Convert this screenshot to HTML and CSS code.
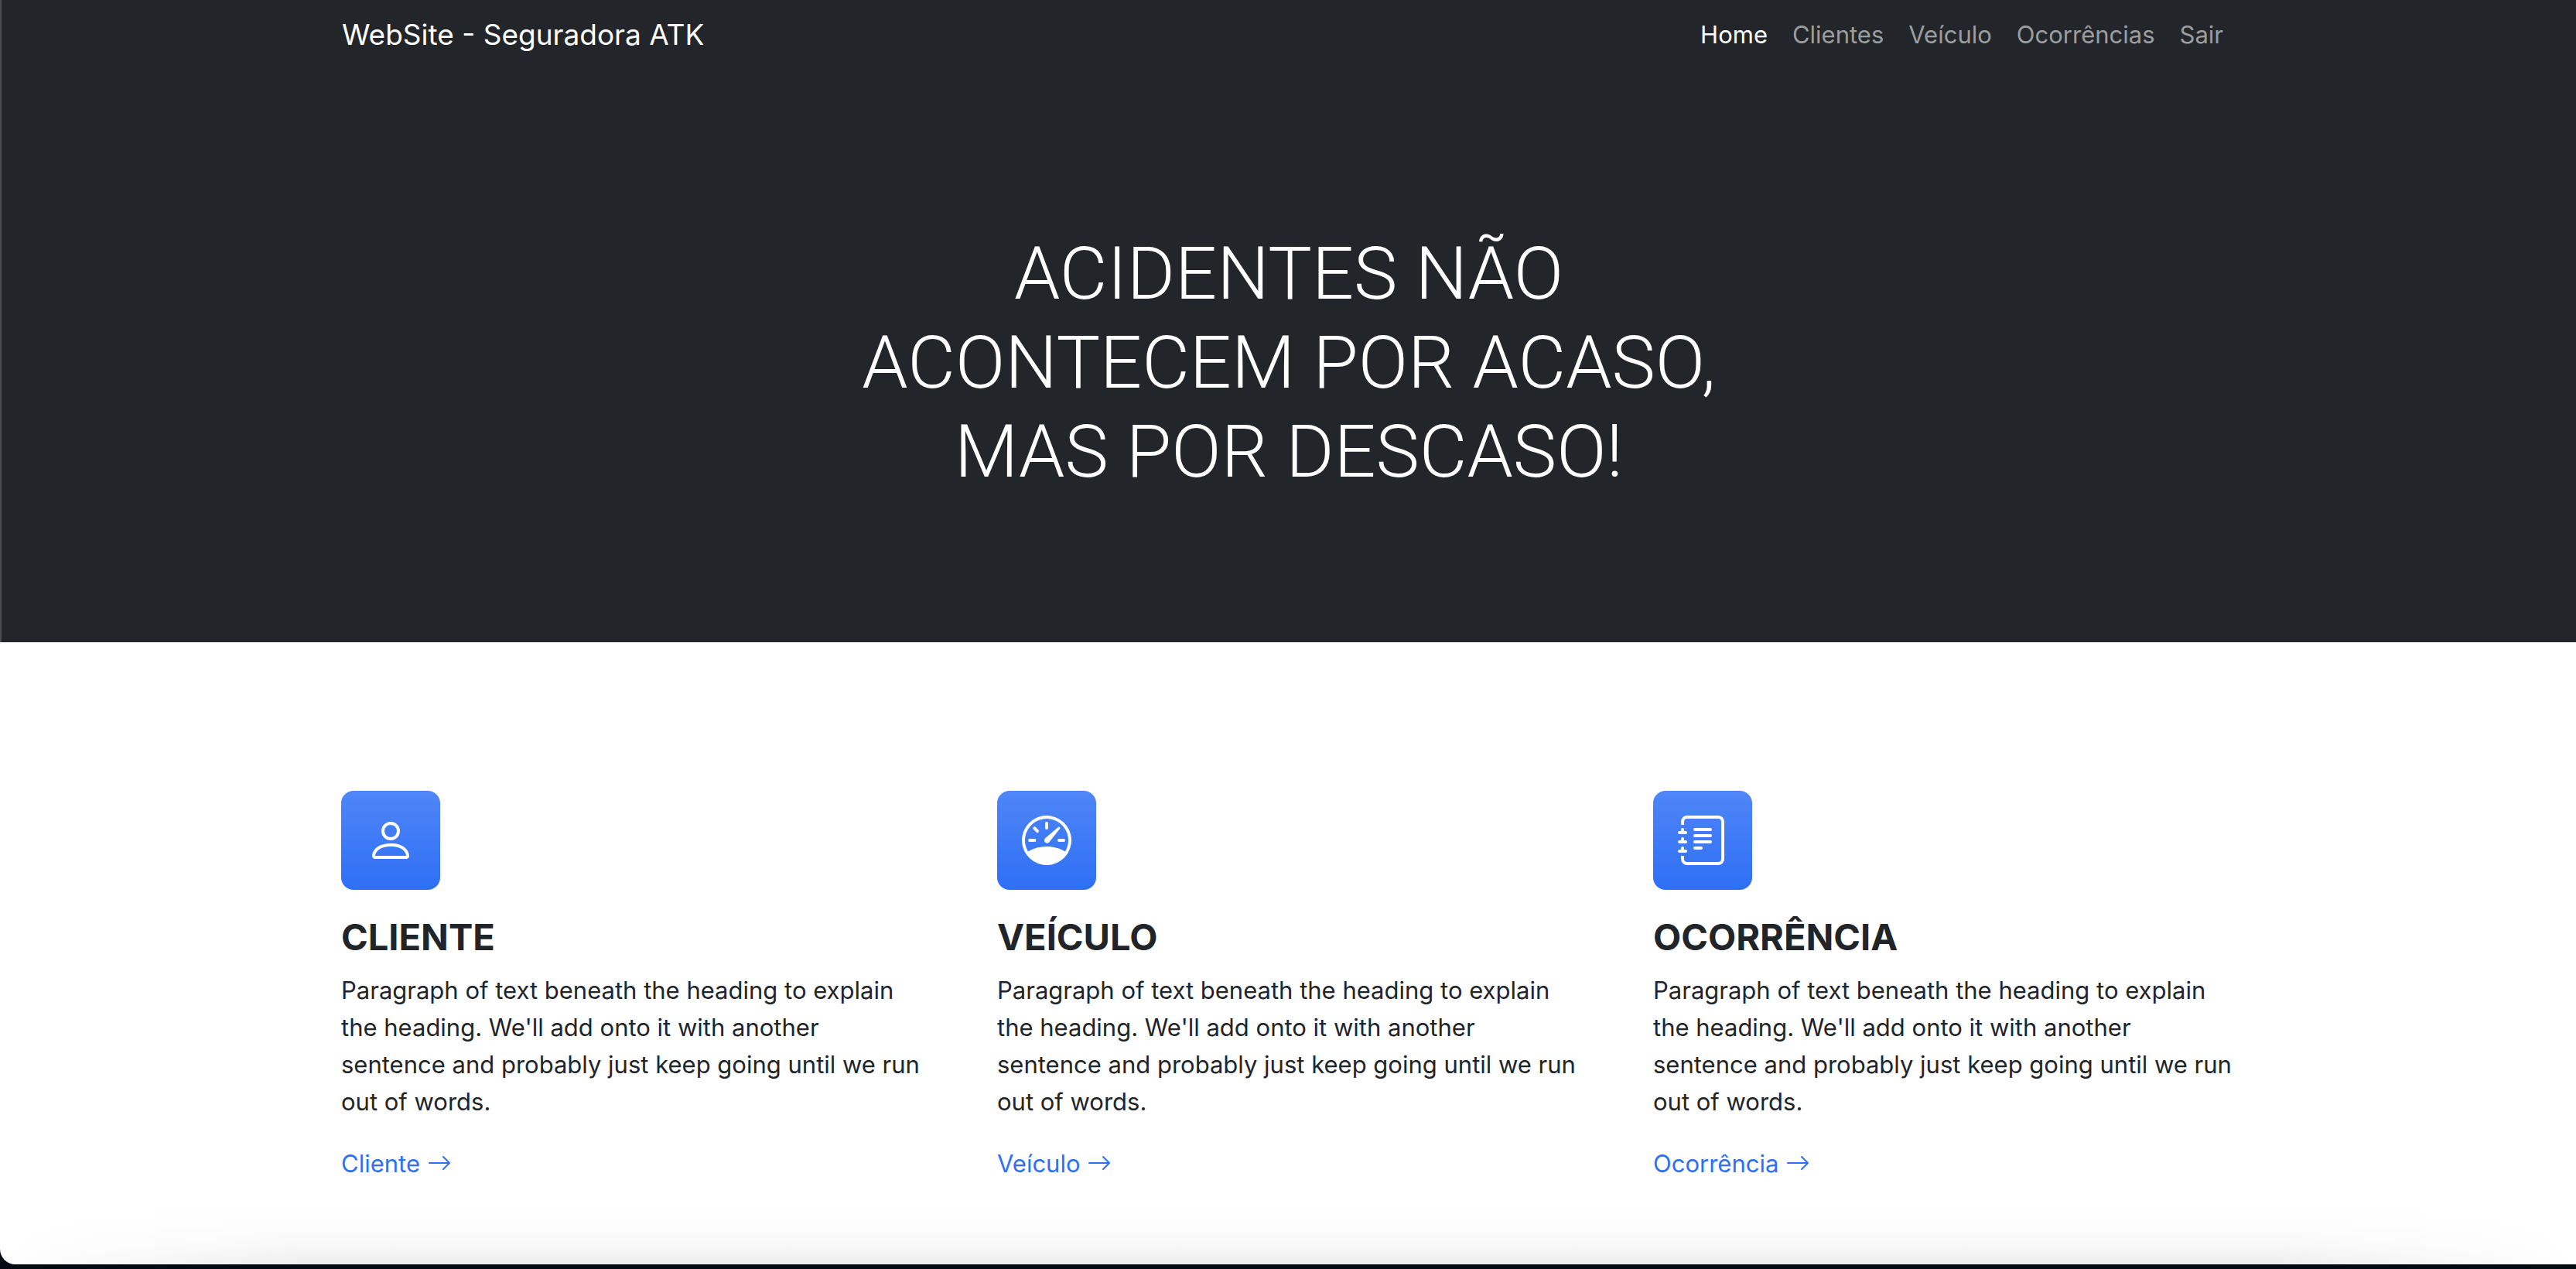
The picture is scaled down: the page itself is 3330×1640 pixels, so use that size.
FILE: index.html
```html
<!DOCTYPE html>
<html lang="pt-BR">
<head>
<meta charset="utf-8">
<meta name="viewport" content="width=device-width, initial-scale=1">
<title>WebSite - Seguradora ATK</title>
<link rel="stylesheet" href="styles.css">
</head>
<body>
<div class="window">
  <header class="top">
    <nav class="navbar container">
      <a class="brand" href="#">WebSite - Seguradora ATK</a>
      <ul class="nav-list">
        <li><a class="nav-link active" href="#">Home</a></li>
        <li><a class="nav-link" href="#">Clientes</a></li>
        <li><a class="nav-link" href="#">Veículo</a></li>
        <li><a class="nav-link" href="#">Ocorrências</a></li>
        <li><a class="nav-link" href="#">Sair</a></li>
      </ul>
    </nav>
    <div class="hero">
      <h1 class="hero-title">ACIDENTES NÃO ACONTECEM POR ACASO, MAS POR DESCASO!</h1>
    </div>
  </header>
  <main class="features container">
    <section class="feature">
      <div class="feature-icon">
        <svg viewBox="0 0 16 16" aria-hidden="true"><path d="M8 8a3 3 0 1 0 0-6 3 3 0 0 0 0 6Zm2-3a2 2 0 1 1-4 0 2 2 0 0 1 4 0Zm4 8c0 1-1 1-1 1H3s-1 0-1-1 1-4 6-4 6 3 6 4Zm-1-.004c-.001-.246-.154-.986-.832-1.664C11.516 10.68 10.289 10 8 10c-2.29 0-3.516.68-4.168 1.332-.678.678-.83 1.418-.832 1.664h10Z"/></svg>
      </div>
      <h2 class="feature-title">CLIENTE</h2>
      <p class="feature-text">Paragraph of text beneath the heading to explain the heading. We'll add onto it with another sentence and probably just keep going until we run out of words.</p>
      <a class="feature-link" href="#">Cliente <svg class="arrow" viewBox="0 0 16 16" aria-hidden="true"><path d="M1 8a.5.5 0 0 1 .5-.5h11.793l-3.147-3.146a.5.5 0 0 1 .708-.708l4 4a.5.5 0 0 1 0 .708l-4 4a.5.5 0 0 1-.708-.708L13.293 8.500H1.500A.5.5 0 0 1 1 8z"/></svg></a>
    </section>
    <section class="feature">
      <div class="feature-icon">
        <svg viewBox="0 0 16 16" aria-hidden="true"><path d="M8 2a.5.5 0 0 1 .5.5V4a.5.5 0 0 1-1 0V2.500A.5.5 0 0 1 8 2zM3.732 3.732a.5.5 0 0 1 .707 0l.915.914a.5.5 0 1 1-.708.708l-.914-.915a.5.5 0 0 1 0-.707zM2 8a.5.5 0 0 1 .5-.5h1.586a.5.5 0 0 1 0 1H2.500A.5.5 0 0 1 2 8zm9.500 0a.5.5 0 0 1 .5-.5h1.500a.5.5 0 0 1 0 1H12a.5.5 0 0 1-.5-.5zm.754-4.246a.389.389 0 0 0-.527-.020L7.547 7.310A.91.91 0 1 0 8.850 8.569l3.434-4.297a.389.389 0 0 0-.029-.518z"/><path fill-rule="evenodd" d="M6.664 15.889A8 8 0 1 1 9.336.110a8 8 0 0 1-2.672 15.780zm-4.665-4.283A11.945 11.945 0 0 1 8 10c2.186 0 4.236.585 6.001 1.606a7 7 0 1 0-12.002 0z"/></svg>
      </div>
      <h2 class="feature-title">VEÍCULO</h2>
      <p class="feature-text">Paragraph of text beneath the heading to explain the heading. We'll add onto it with another sentence and probably just keep going until we run out of words.</p>
      <a class="feature-link" href="#">Veículo <svg class="arrow" viewBox="0 0 16 16" aria-hidden="true"><path d="M1 8a.5.5 0 0 1 .5-.5h11.793l-3.147-3.146a.5.5 0 0 1 .708-.708l4 4a.5.5 0 0 1 0 .708l-4 4a.5.5 0 0 1-.708-.708L13.293 8.500H1.500A.5.5 0 0 1 1 8z"/></svg></a>
    </section>
    <section class="feature">
      <div class="feature-icon">
        <svg viewBox="0 0 16 16" aria-hidden="true"><path d="M5 10.500a.5.5 0 0 1 .5-.5h2a.5.5 0 0 1 0 1h-2a.5.5 0 0 1-.5-.5zm0-2a.5.5 0 0 1 .5-.5h5a.5.5 0 0 1 0 1h-5a.5.5 0 0 1-.5-.5zm0-2a.5.5 0 0 1 .5-.5h5a.5.5 0 0 1 0 1h-5a.5.5 0 0 1-.5-.5zm0-2a.5.5 0 0 1 .5-.5h5a.5.5 0 0 1 0 1h-5a.5.5 0 0 1-.5-.5z"/><path d="M3 0h10a2 2 0 0 1 2 2v12a2 2 0 0 1-2 2H3a2 2 0 0 1-2-2v-1h1v1a1 1 0 0 0 1 1h10a1 1 0 0 0 1-1V2a1 1 0 0 0-1-1H3a1 1 0 0 0-1 1v1H1V2a2 2 0 0 1 2-2z"/><path d="M1 5v-.5a.5.5 0 0 1 1 0V5h.5a.5.5 0 0 1 0 1h-2a.5.5 0 0 1 0-1H1zm0 3v-.5a.5.5 0 0 1 1 0V8h.5a.5.5 0 0 1 0 1h-2a.5.5 0 0 1 0-1H1zm0 3v-.5a.5.5 0 0 1 1 0v.5h.5a.5.5 0 0 1 0 1h-2a.5.5 0 0 1 0-1H1z"/></svg>
      </div>
      <h2 class="feature-title">OCORRÊNCIA</h2>
      <p class="feature-text">Paragraph of text beneath the heading to explain the heading. We'll add onto it with another sentence and probably just keep going until we run out of words.</p>
      <a class="feature-link" href="#">Ocorrência <svg class="arrow" viewBox="0 0 16 16" aria-hidden="true"><path d="M1 8a.5.5 0 0 1 .5-.5h11.793l-3.147-3.146a.5.5 0 0 1 .708-.708l4 4a.5.5 0 0 1 0 .708l-4 4a.5.5 0 0 1-.708-.708L13.293 8.500H1.500A.5.5 0 0 1 1 8z"/></svg></a>
    </section>
  </main>
</div>
</body>
</html>
```

FILE: styles.css
```css
* {
  box-sizing: border-box;
}

body {
  margin: 0;
  min-height: 100vh;
  display: flex;
  flex-direction: column;
  padding-bottom: 6px;
  background: #030a14;
  color: #212529;
  font-family: Inter, "Liberation Sans", sans-serif;
  font-size: 31px;
  line-height: 48px;
}

a {
  text-decoration: none;
}

.window {
  flex: 1;
  background:
    linear-gradient(90deg, #fff, #fff0 12%, #fff0 88%, #fff),
    linear-gradient(0deg, #ededed, #f8f8f8 24px, #fdfdfd 50px, #fff 80px);
  border-bottom-left-radius: 20px;
  overflow: hidden;
}

.container {
  width: 100%;
  max-width: 2640px;
  margin: 0 auto;
  padding-left: 96px;
  padding-right: 96px;
}

.top {
  background: #22262a;
  border-left: 2px solid #484b4f;
}

.navbar {
  display: flex;
  align-items: center;
  justify-content: space-between;
  height: 90px;
}

.brand {
  color: #fff;
  font-size: 37px;
}

.nav-list {
  display: flex;
  margin: 0;
  padding: 0;
  list-style: none;
}

.nav-link {
  display: block;
  padding: 0 16px;
  color: #9b9d9f;
}

.nav-link.active {
  color: #fff;
}

.hero {
  padding: 206px 96px 189px;
}

.hero-title {
  max-width: 1200px;
  margin: 0 auto;
  color: #fff;
  font-family: Roboto, Inter, sans-serif;
  font-size: 95px;
  font-weight: 300;
  line-height: 115px;
  text-align: center;
}

.features {
  display: grid;
  grid-template-columns: repeat(3, 1fr);
  gap: 96px;
  padding-top: 192px;
  padding-bottom: 96px;
}

.feature-icon {
  display: flex;
  align-items: center;
  justify-content: center;
  width: 128px;
  height: 128px;
  margin-bottom: 32px;
  border-radius: 16px;
  background: linear-gradient(#4f86f7, #2e6ff5);
}

.feature-icon svg {
  width: 64px;
  height: 64px;
  fill: #fff;
}

.feature-title {
  margin: 0 0 16px;
  font-size: 47px;
  font-weight: 700;
  line-height: 58px;
}

.feature-text {
  margin: 0 0 32px;
}

.feature-link {
  color: #2e6ff5;
}

.arrow {
  width: 32px;
  height: 32px;
  vertical-align: -4px;
  fill: currentColor;
}
```
